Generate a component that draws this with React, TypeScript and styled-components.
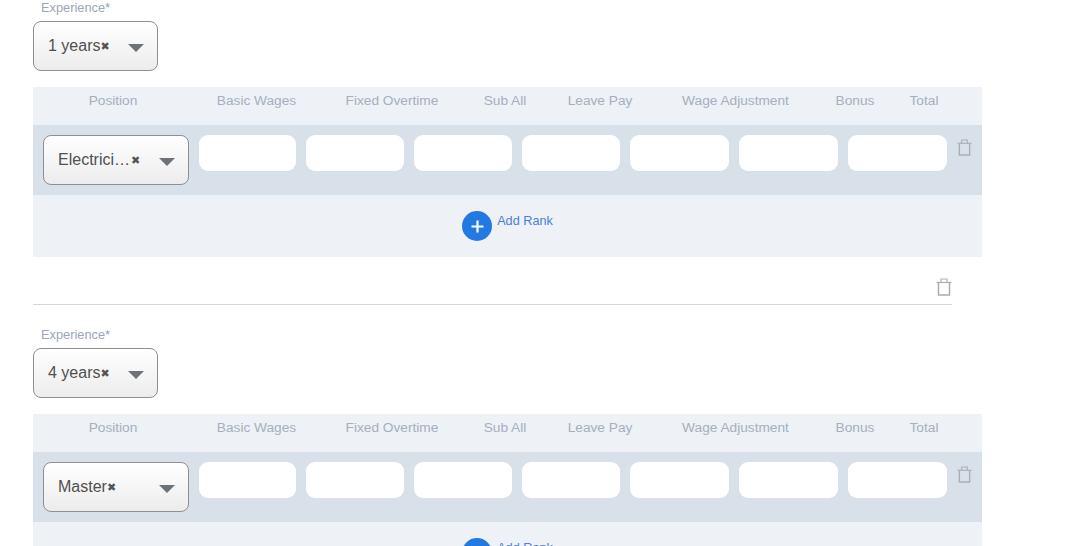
import React from "react";
import styled, { createGlobalStyle } from "styled-components";

const GlobalStyle = createGlobalStyle`
  html, body {
    margin: 0;
    height: 546px;
    overflow: hidden;
    background: #fff;
    font-family: "Liberation Sans", Arial, sans-serif;
  }
`;

const Page = styled.div`
  width: 949px;
  padding-left: 33px;
`;

const Block = styled.section`
  margin-bottom: 22px;
`;

const Label = styled.div`
  height: 14px;
  padding-top: 1px;
  margin-bottom: -1px;
  padding-left: 8px;
  font-size: 12.8px;
  line-height: 14px;
  color: #9ba6b6;

  span {
    color: #7f9fd0;
  }
`;

const Select = styled.div<{ $width: number }>`
  box-sizing: border-box;
  display: flex;
  align-items: center;
  width: ${(p) => p.$width}px;
  height: 50px;
  flex: none;
  padding: 0 13px 0 14px;
  border: 1px solid #8f8f8f;
  border-radius: 8px;
  background: linear-gradient(#ffffff, #ececec);
  font-size: 16px;
  color: #505050;
`;

const ExperienceSelect = styled(Select)`
  margin-top: 7px;
`;

const SelectText = styled.span`
  max-width: 73px;
  overflow: hidden;
  white-space: nowrap;
  text-overflow: ellipsis;
`;

const Clear = styled.span`
  font-family: "DejaVu Sans", sans-serif;
  font-size: 11px;
  font-weight: 700;
  line-height: 1;
  color: #555;
`;

const Caret = styled.span`
  margin-left: auto;
  margin-top: 4px;
  border-top: 8px solid #6c7278;
  border-left: 8px solid transparent;
  border-right: 8px solid transparent;
`;

const Table = styled.div`
  margin-top: 16px;
`;

const HeaderRow = styled.div`
  display: grid;
  grid-template-columns: 160px 127px 144px 82px 108px 163px 76px 62px 27px;
  height: 38px;
  padding-bottom: 11px;
  box-sizing: border-box;
  align-items: center;
  background: #eef1f6;
`;

const HeaderCell = styled.div`
  text-align: center;
  font-size: 13.7px;
  color: #a6afc0;
`;

const Row = styled.div`
  box-sizing: border-box;
  display: flex;
  align-items: flex-start;
  gap: 10px;
  height: 70px;
  padding: 10px;
  background: #d8e0e9;
`;

const Inputs = styled.div`
  display: grid;
  grid-template-columns: 97px 98px 98px 98px 99px 99px 99px;
  column-gap: 10px;
  flex: none;
`;

const Input = styled.div`
  height: 36px;
  border-radius: 9px;
  background: #fff;
`;

const RowTrash = styled.span`
  display: flex;
  margin-top: 4px;
`;

const AddBand = styled.div`
  box-sizing: border-box;
  display: flex;
  justify-content: center;
  gap: 5px;
  height: 62px;
  padding-top: 16px;
  background: #eef1f6;
`;

const AddCircle = styled.span`
  display: flex;
  align-items: center;
  justify-content: center;
  width: 30px;
  height: 30px;
  border-radius: 50%;
  background: #2279e2;
`;

const AddText = styled.span`
  font-size: 12.7px;
  line-height: 20px;
  color: #4a7fd6;
`;

const BlockFooter = styled.div`
  box-sizing: border-box;
  display: flex;
  justify-content: flex-end;
  align-items: flex-end;
  width: 919px;
  height: 48px;
  padding-bottom: 8px;
  border-bottom: 1px solid #d6d6d6;
`;

const TrashIcon = ({ size }: { size: number }) => (
  <svg width={size} height={size + 2} viewBox="0 0 16 18" fill="none" stroke="#a9afb8" strokeWidth="1.2">
    <path d="M0.5 4.5H15.5" />
    <path d="M5 4.5V1H11V4.5" />
    <path d="M2.5 4.5V17H13.5V4.5" strokeWidth="1.5" />
  </svg>
);

const columns = [
  "Position",
  "Basic Wages",
  "Fixed Overtime",
  "Sub All",
  "Leave Pay",
  "Wage Adjustment",
  "Bonus",
  "Total",
];

const blocks = [
  { experience: "1 years", position: "Electrician" },
  { experience: "4 years", position: "Master" },
];

const App: React.FC = () => {
  return (
    <Page>
      <GlobalStyle />
      {blocks.map((block) => (
        <Block key={block.experience}>
          <Label>
            Experience<span>*</span>
          </Label>
          <ExperienceSelect $width={125}>
            <SelectText>{block.experience}</SelectText>
            <Clear>✖</Clear>
            <Caret />
          </ExperienceSelect>
          <Table>
            <HeaderRow>
              {columns.map((name) => (
                <HeaderCell key={name}>{name}</HeaderCell>
              ))}
            </HeaderRow>
            <Row>
              <Select $width={146}>
                <SelectText>{block.position}</SelectText>
                <Clear>✖</Clear>
                <Caret />
              </Select>
              <Inputs>
                {columns.slice(1).map((name) => (
                  <Input key={name} />
                ))}
              </Inputs>
              <RowTrash>
                <TrashIcon size={15} />
              </RowTrash>
            </Row>
            <AddBand>
              <AddCircle>
                <svg width="13" height="13" viewBox="0 0 13 13" stroke="#fff" strokeWidth="2.2">
                  <path d="M6.5 0.5V12.5M0.5 6.5H12.5" />
                </svg>
              </AddCircle>
              <AddText>Add Rank</AddText>
            </AddBand>
          </Table>
          <BlockFooter>
            <TrashIcon size={16} />
          </BlockFooter>
        </Block>
      ))}
    </Page>
  );
};

export default App;
